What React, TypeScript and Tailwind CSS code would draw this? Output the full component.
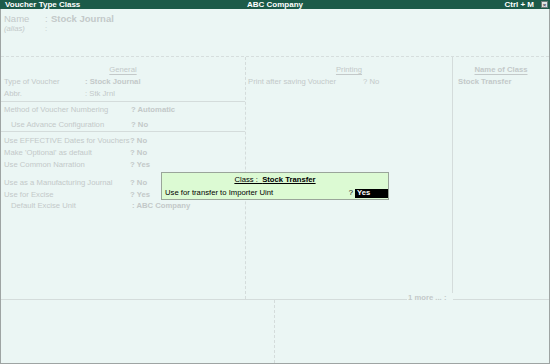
import React from "react";

const txt = "text-[#c3c9c9]";

function Row({ label, value, labelW, indent = false, h = "h-[12px]", bold = true }: { label: string; value: string; labelW: string; indent?: boolean; h?: string; bold?: boolean }) {
  return (
    <div className={`flex items-center ${h}`}>
      <div className={`${labelW} ${indent ? "pl-[10px]" : "pl-[3px]"} whitespace-nowrap shrink-0`}>{label}</div>
      <div className={`whitespace-nowrap ${bold ? "font-bold" : ""}`}>{value}</div>
    </div>
  );
}

export default function App() {
  return (
    <div
      className={`relative w-[550px] h-[364px] bg-[#ebf6f4] overflow-hidden flex flex-col ${txt} text-[7.7px] leading-none`}
      style={{ fontFamily: '"Liberation Sans", Arial, sans-serif' }}
    >
      {/* title bar */}
      <div className="h-[9px] bg-[#1c5b49] text-white font-bold text-[8px] flex items-center shrink-0 relative">
        <div className="pl-[5px] w-[247px]">Voucher Type Class</div>
        <div className="flex-1">ABC Company</div>
        <div className="pr-[7px]">Ctrl + M</div>
        <div className="w-[7px] h-[7px] bg-[#dfe6e4] border border-[#6c7c78] mr-[2px] flex items-center justify-center text-[#445] text-[6px]">×</div>
      </div>

      <div className="flex-1 flex flex-col border-l border-r border-b border-[#9ea4a3]">
        {/* name block */}
        <div className="h-[48px] shrink-0 border-b border-dashed border-[#d6dedd] pt-[4px]">
          <div className="flex items-center h-[11px] text-[9.5px]">
            <div className="pl-[3px] w-[44px]">Name</div>
            <div className="w-[6px]">:</div>
            <div className="font-bold">Stock Journal</div>
          </div>
          <div className="flex items-center h-[10px]">
            <div className="pl-[3px] w-[44px] italic">(alias)</div>
            <div>:</div>
          </div>
        </div>

        {/* main panel */}
        <div className="h-[243px] shrink-0 flex border-b border-[#d4dcdb]">
          {/* General */}
          <div className="w-[245px] shrink-0 border-r border-dashed border-[#d4dcdb] pt-[7px]">
            <div className="h-[12px] flex items-center justify-center">
              <span className="underline underline-offset-2">General</span>
            </div>
            <Row label="Type of Voucher" value=": Stock Journal" labelW="w-[84px]" />
            <Row label="Abbr." value=": Stk Jrnl" labelW="w-[84px]" bold={false} />
            <div className="h-[2px] border-b border-[#d4dcdb]" />
            <Row label="Method of Voucher Numbering" value="? Automatic" labelW="w-[130px]" h="h-[16px]" />
            <Row label="Use Advance Configuration" value="? No" labelW="w-[130px]" indent h="h-[13px]" />
            <div className="border-b border-[#d4dcdb]" />
            <div className="h-[3px]" />
            <Row label="Use EFFECTIVE Dates for Vouchers" value="? No" labelW="w-[129px]" />
            <Row label="Make 'Optional' as default" value="? No" labelW="w-[129px]" />
            <Row label="Use Common Narration" value="? Yes" labelW="w-[129px]" />
            <div className="h-[6px]" />
            <Row label="Use as a Manufacturing Journal" value="? No" labelW="w-[129px]" />
            <Row label="Use for Excise" value="? Yes" labelW="w-[129px]" />
            <Row label="Default Excise Unit" value=": ABC Company" labelW="w-[131px]" indent h="h-[10px]" />
          </div>

          {/* Printing */}
          <div className="w-[207px] shrink-0 border-r border-[#d4dcdb] pt-[7px] relative">
            <div className="h-[12px] flex items-center justify-center">
              <span className="underline underline-offset-2">Printing</span>
            </div>
            <div className="flex items-center h-[12px]">
              <div className="pl-[2px] w-[117px]">Print after saving Voucher</div>
              <div>? No</div>
            </div>
            <div className="absolute right-[-1px] bottom-[-3px] w-[46px] h-[9px] bg-[#ebf6f4] flex items-center pl-[1px] font-bold">
              1 more ... :
            </div>
          </div>

          {/* Name of Class */}
          <div className="flex-1 pt-[7px]">
            <div className="h-[12px] flex items-center justify-center">
              <span className="underline underline-offset-2 font-bold">Name of Class</span>
            </div>
            <div className="flex items-center h-[12px] pl-[5px] font-bold">Stock Transfer</div>
          </div>
        </div>

        {/* bottom */}
        <div className="flex-1 flex">
          <div className="w-[274px] border-r border-dashed border-[#d4dcdb]" />
          <div className="flex-1" />
        </div>
      </div>

      {/* popup */}
      <div className="absolute left-[161px] top-[172px] w-[228px] h-[28px] bg-[#dcfad3] border border-[#9aa59a] text-black flex flex-col">
        <div className="h-[14px] flex items-center justify-center">
          <span className="underline underline-offset-1">
            Class :&nbsp; <span className="font-bold">Stock Transfer</span>
          </span>
        </div>
        <div className="flex items-center h-[12px] pl-[3px]">
          <div className="flex-1">Use for transfer to Importer Uint</div>
          <div className="pr-[2px]">?</div>
          <div className="w-[33px] h-[9px] bg-black text-white font-bold flex items-center pl-[2px]">Yes</div>
        </div>
      </div>
    </div>
  );
}
